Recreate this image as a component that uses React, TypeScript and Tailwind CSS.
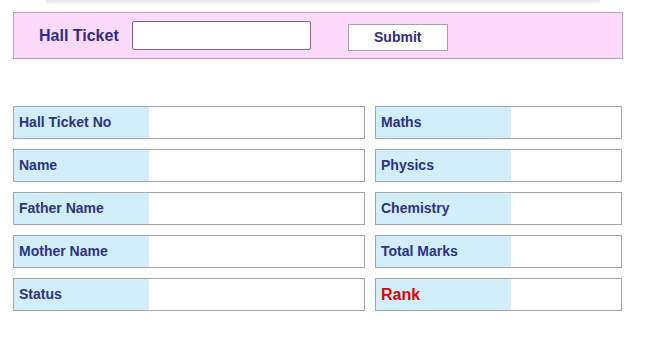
const leftFields = ["Hall Ticket No", "Name", "Father Name", "Mother Name", "Status"];
const rightFields = ["Maths", "Physics", "Chemistry", "Total Marks", "Rank"];

const Field = ({ label, width, red }: { label: string; width: string; red?: boolean }) => (
  <div className={`${width} h-[33px] flex border border-[#a6a6a6] bg-white`}>
    <div
      className={`w-[135px] h-full bg-[#d2eefc] flex items-center pl-[5px] font-bold ${
        red ? "text-[#e00000] text-[16px]" : "text-[#2b3384] text-[14px]"
      }`}
    >
      {label}
    </div>
    <div className="flex-1" />
  </div>
);

const App = () => {
  return (
    <div className="w-[656px] h-[337px] bg-white font-['Liberation_Sans',Arial,sans-serif] overflow-hidden">
      <div className="mx-[46px] w-[554px] h-[6px] rounded-b-[40%] bg-gradient-to-b from-[#e8e8e8] to-white" />
      <div className="ml-[13px] mt-[6px] w-[610px] h-[47px] bg-[#fdd9fb] border border-[#b4a3bb] flex items-center">
        <span className="ml-[25px] text-[16px] font-bold text-[#2e2e80]">Hall Ticket</span>
        <input
          type="text"
          className="ml-[13px] w-[179px] h-[29px] bg-white border border-[#7b6b80] rounded-[2px] outline-none"
        />
        <button className="ml-[37px] mt-[3px] w-[100px] h-[27px] bg-white border border-[#a4a4a4] text-[14px] font-bold text-[#2e2e80]">
          Submit
        </button>
      </div>
      <div className="ml-[13px] mt-[47px] flex gap-[10px]">
        <div className="flex flex-col gap-[10px]">
          {leftFields.map((f) => (
            <Field key={f} label={f} width="w-[352px]" />
          ))}
        </div>
        <div className="flex flex-col gap-[10px]">
          {rightFields.map((f) => (
            <Field key={f} label={f} width="w-[247px]" red={f === "Rank"} />
          ))}
        </div>
      </div>
    </div>
  );
};

export default App;
